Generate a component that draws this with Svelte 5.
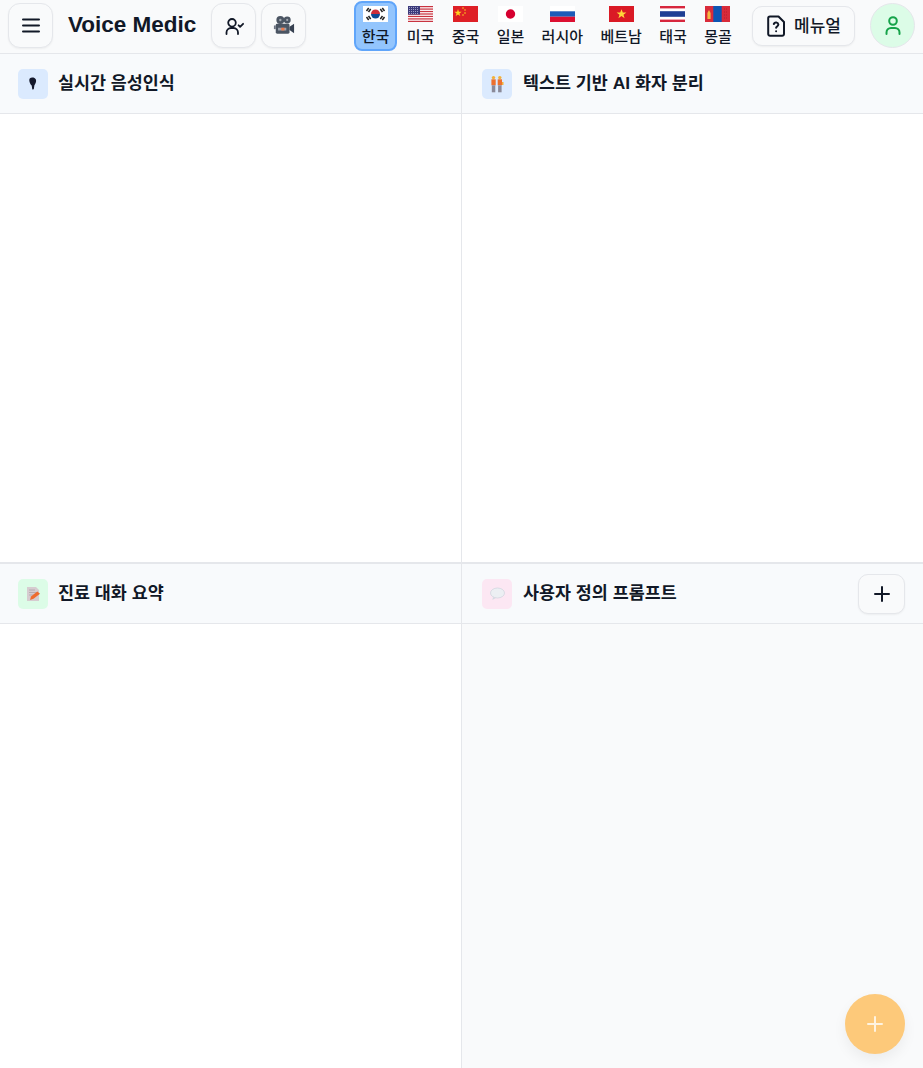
<script>
  const langs = [
    { id: 'kr', label: '한국', active: true },
    { id: 'us', label: '미국' },
    { id: 'cn', label: '중국' },
    { id: 'jp', label: '일본' },
    { id: 'ru', label: '러시아' },
    { id: 'vn', label: '베트남' },
    { id: 'th', label: '태국' },
    { id: 'mn', label: '몽골' }
  ];
  const usStripes = [0, 2.46, 4.92, 7.38, 9.84, 12.3, 14.76];
</script>

<div class="page">
  <header class="topbar">
    <button class="tool" aria-label="메뉴">
      <svg class="ico" viewBox="0 0 24 24"><path d="M4 6.500h16M4 12.500h16M4 18.500h16" /></svg>
    </button>
    <h1 class="brand">Voice Medic</h1>
    <button class="tool" aria-label="화자">
      <svg class="ico thin" viewBox="0 0 24 24"><path d="M4.500 21v-1.500a4.500 4.500 0 0 1 4.500-4.500h2.500a4.500 4.500 0 0 1 4.500 4.500V21" /><circle cx="10" cy="9.800" r="3.800" /><path d="M16.600 12.300l1.500 1.500 3-3" /></svg>
    </button>
    <button class="tool" aria-label="영상">
      <svg class="emoji-lg" viewBox="0 0 24 24">
        <circle cx="8" cy="6.500" r="4.300" fill="#4b5563" /><circle cx="15.500" cy="6.500" r="3.800" fill="#4b5563" />
        <circle cx="8" cy="6.500" r="1.300" fill="#a3a9b3" /><circle cx="15.500" cy="6.500" r="1.200" fill="#a3a9b3" />
        <rect x="3" y="10.500" width="15" height="11" rx="1.500" fill="#4b5563" />
        <rect x="5.500" y="15" width="9" height="3" fill="#9ca3af" /><rect x="9" y="15" width="3.500" height="3" fill="#ea7a4c" />
        <path d="M18 14l5-3.500v10.500l-5-3.500z" fill="#374151" /><rect x="1" y="12.500" width="2" height="4" fill="#6b7280" />
      </svg>
    </button>

    <nav class="langs">
      {#each langs as l}
        <button class="lang" class:active={l.active}>
          <svg class="flag" viewBox="0 0 25 16" preserveAspectRatio="none">
            {#if l.id === 'kr'}
              <rect width="25" height="16" fill="#fff" />
              <path d="M8 8a4.500 4.500 0 0 1 9 0z" fill="#cd2e3a" /><path d="M8 8a4.500 4.500 0 0 0 9 0z" fill="#0f4a94" />
              <g stroke="#222" stroke-width="1.500"><path d="M3.500 5l2.200-3M5.500 6l2.200-3M17.300 3l2.200 3M19.300 2l2.200 3M3.500 11l2.200 3M5.500 10l2.200 3M17.300 13l2.200-3M19.300 14l2.200-3" /></g>
            {:else if l.id === 'us'}
              <rect width="25" height="16" fill="#fff" />
              {#each usStripes as y}<rect {y} width="25" height="1.230" fill="#c8323f" />{/each}
              <rect width="12" height="8.600" fill="#3c3b7c" />
              <path d="M1 1.500h10M1 3.500h10M1 5.500h10M1 7.500h10" stroke="#c9cbe8" stroke-width=".7" stroke-dasharray="1 1" />
            {:else if l.id === 'cn'}
              <rect width="25" height="16" fill="#de1f26" />
              <path d="M5 3l.9 2.700h2.800L6.400 7.400l.9 2.700L5 8.400 2.700 10.100l.9-2.700-2.300-1.700h2.800z" fill="#ffd21f" />
              <g fill="#ffd21f"><circle cx="10" cy="2" r=".8" /><circle cx="12" cy="4" r=".8" /><circle cx="12" cy="7" r=".8" /><circle cx="10" cy="9" r=".8" /></g>
            {:else if l.id === 'jp'}
              <rect width="25" height="16" fill="#fff" /><circle cx="12.500" cy="8" r="4.700" fill="#d6002f" />
            {:else if l.id === 'ru'}
              <rect width="25" height="5.400" fill="#fff" /><rect y="5.300" width="25" height="5.400" fill="#1d5bb8" /><rect y="10.700" width="25" height="5.300" fill="#dc0f31" />
            {:else if l.id === 'vn'}
              <rect width="25" height="16" fill="#da1a25" />
              <path d="M12.500 3.200l1.300 3.300h3.600l-2.900 2.200 1.100 3.600-3.100-2.200-3.100 2.200 1.100-3.600-2.900-2.200h3.600z" fill="#ffd83a" />
            {:else if l.id === 'th'}
              <rect width="25" height="16" fill="#fff" /><rect width="25" height="2.400" fill="#d7263d" /><rect y="13.600" width="25" height="2.400" fill="#d7263d" /><rect y="5.200" width="25" height="5.600" fill="#1f3f94" />
            {:else}
              <rect width="25" height="16" fill="#d92b3a" /><rect x="8.300" width="8.400" height="16" fill="#0d55b3" />
              <path d="M4 4l1.600 3v6H2.400V7z" fill="#f5b942" />
              <path d="M19 3h4M19 6h4M19 9h4M19 12h4" stroke="#b81f2d" stroke-width="1" stroke-dasharray="1 1" />
            {/if}
          </svg>
          <span>{l.label}</span>
        </button>
      {/each}
    </nav>

    <button class="manual">
      <svg class="ico" viewBox="0 0 24 24"><path d="M6 2.500h8.500L20 8v12a1.800 1.800 0 0 1-1.800 1.800H6A1.800 1.800 0 0 1 4.200 20V4.300A1.800 1.800 0 0 1 6 2.500z" /><path d="M9.800 10a2.400 2.400 0 0 1 4.600.6c0 1.600-2.300 2-2.300 3.200M12.100 17.200v.1" /></svg>
      <span>메뉴얼</span>
    </button>
    <button class="avatar" aria-label="사용자">
      <svg class="ico green" viewBox="0 0 24 24"><circle cx="12" cy="8" r="3.800" /><path d="M5.500 21v-1.500a4.500 4.500 0 0 1 4.500-4.500h4a4.500 4.500 0 0 1 4.500 4.500V21" /></svg>
    </button>
  </header>

  <main class="grid">
    <section class="panel top left">
      <div class="head">
        <span class="badge blue">
          <svg class="emoji" viewBox="0 0 16 16"><path d="M4.700 2.500C6.300 1 10 1.300 10.900 3.600c.7 2-.4 4.300-1.500 5.700l-.6 4-1.500.2-.6-3.900C5.200 8.200 3.500 4.300 4.700 2.500z" fill="#14182c" /></svg>
        </span>
        <h2>실시간 음성인식</h2>
      </div>
    </section>
    <section class="panel top">
      <div class="head right">
        <span class="badge blue">
          <svg class="emoji big" viewBox="0 0 16 18">
            <circle cx="4.500" cy="2.600" r="1.700" fill="#f2b13a" /><circle cx="10.800" cy="2.600" r="1.700" fill="#f2b13a" />
            <rect x="2.400" y="4.300" width="4.300" height="6" fill="#ec6f2d" /><rect x="8.700" y="4.300" width="4.300" height="6" fill="#ec6f2d" />
            <rect x="2.800" y="10.300" width="3.500" height="7" fill="#8a8a99" /><rect x="9.100" y="10.300" width="3.500" height="7" fill="#8a8a99" />
            <rect x="13" y="7" width="1.500" height="3" fill="#f2b13a" />
          </svg>
        </span>
        <h2>텍스트 기반 AI 화자 분리</h2>
      </div>
    </section>
    <section class="panel left">
      <div class="head">
        <span class="badge green-bg">
          <svg class="emoji" viewBox="0 0 16 16">
            <path d="M2 1h9l3 3v11H2z" fill="#d6ccd0" />
            <path d="M4 4h6M4 6.500h8M4 9h5" stroke="#b3a8ad" stroke-width=".9" />
            <path d="M5 14l1-3.400 6.300-5 2.700 2.200-6.500 5z" fill="#ee6c2f" />
          </svg>
        </span>
        <h2>진료 대화 요약</h2>
      </div>
    </section>
    <section class="panel muted">
      <div class="head right">
        <span class="badge pink">
          <svg class="emoji" viewBox="0 0 16 14">
            <ellipse cx="8.500" cy="6" rx="7" ry="5" fill="#eceff3" stroke="#c8cfd8" stroke-width=".6" />
            <path d="M4 10l-.6 3 3.400-2z" fill="#d5dbe3" />
          </svg>
        </span>
        <h2>사용자 정의 프롬프트</h2>
        <button class="add" aria-label="추가">
          <svg class="ico" viewBox="0 0 24 24"><path d="M12 5v14M5 12h14" /></svg>
        </button>
      </div>
    </section>
  </main>

  <button class="fab" aria-label="새로 만들기">
    <svg class="ico white" viewBox="0 0 24 24"><path d="M12 5v14M5 12h14" /></svg>
  </button>
</div>

<style>
  :global(body) {
    margin: 0;
    background: #fff;
    font-family: "Liberation Sans", "Noto Sans CJK KR", sans-serif;
    color: #111827;
  }
  button {
    font-family: inherit;
    color: inherit;
    cursor: pointer;
    padding: 0;
  }
  .page {
    position: relative;
    height: 1068px;
    overflow: hidden;
    display: flex;
    flex-direction: column;
  }
  .topbar {
    height: 53px;
    flex: none;
    border-bottom: 1px solid #e5e7eb;
    background: #f9fafb;
    display: flex;
    align-items: center;
    padding: 0 8px;
    gap: 5px;
  }
  .tool {
    width: 45px;
    height: 45px;
    flex: none;
    display: flex;
    align-items: center;
    justify-content: center;
    background: #f9fafb;
    border: 1px solid #e5e7eb;
    border-radius: 12px;
    box-shadow: 0 1px 2px rgba(0, 0, 0, 0.05);
    margin-bottom: 3px;
  }
  .ico {
    width: 24px;
    height: 24px;
    flex: none;
    fill: none;
    stroke: #111827;
    stroke-width: 2;
    stroke-linecap: round;
    stroke-linejoin: round;
  }
  .ico.thin { stroke-width: 1.800; }
  .ico.green { stroke: #16a34a; }
  .ico.white { stroke: #fef3e0; }
  .emoji-lg { width: 22px; height: 22px; }
  .brand {
    margin: 0 10px 3px 10px;
    font-size: 22.500px;
    line-height: 32px;
    font-weight: 700;
    white-space: nowrap;
  }
  .langs {
    display: flex;
    gap: 2px;
    margin-left: 42.600px;
    margin-bottom: 2px;
  }
  .lang {
    height: 50px;
    background: transparent;
    border: 2px solid transparent;
    border-radius: 8px;
    display: flex;
    flex-direction: column;
    align-items: center;
    justify-content: flex-start;
    padding: 3px 5.700px 0;
    font-size: 15px;
    line-height: 20px;
    font-weight: 500;
    white-space: nowrap;
  }
  .lang.active {
    background: #93c5fd;
    border-color: #60a5fa;
  }
  .flag {
    width: 25px;
    height: 16px;
    margin-bottom: 5px;
    flex: none;
  }
  .manual {
    width: 103px;
    height: 40px;
    margin-left: auto;
    margin-bottom: 2px;
    padding-right: 2px;
    flex: none;
    display: flex;
    align-items: center;
    justify-content: center;
    gap: 6px;
    background: #f9fafb;
    border: 1px solid #e5e7eb;
    border-radius: 10px;
    box-shadow: 0 1px 2px rgba(0, 0, 0, 0.05);
    font-size: 17px;
    font-weight: 500;
  }
  .manual span { margin-bottom: 2px; }
  .avatar {
    width: 45px;
    height: 45px;
    margin-left: 10px;
    margin-bottom: 3px;
    flex: none;
    display: flex;
    align-items: center;
    justify-content: center;
    border-radius: 50%;
    border: 1px solid #e5e7eb;
    background: #dcfce7;
  }
  .grid {
    flex: 1;
    display: grid;
    grid-template-columns: 462px 1fr;
    grid-template-rows: 510px 1fr;
    min-height: 0;
  }
  .panel {
    background: #fff;
    min-width: 0;
  }
  .panel.left { border-right: 1px solid #e5e7eb; }
  .panel.top { border-bottom: 2px solid #e5e7eb; }
  .panel.muted { background: #f9fafb; }
  .head {
    height: 59px;
    border-bottom: 1px solid #e5e7eb;
    background: #f8fafc;
    display: flex;
    align-items: center;
    gap: 10px;
    padding: 0 18px;
  }
  .head.right {
    padding-left: 20px;
    gap: 11px;
  }
  .badge {
    width: 30px;
    height: 30px;
    border-radius: 5px;
    display: flex;
    align-items: center;
    justify-content: center;
    flex: none;
  }
  .badge.blue { background: #dbeafe; }
  .badge.green-bg { background: #dcfce7; }
  .badge.pink { background: #fce7f3; }
  .emoji { width: 16px; height: 16px; }
  .emoji.big { width: 18px; height: 18px; }
  h2 {
    margin: 0 0 2px;
    font-size: 17.400px;
    line-height: 24px;
    font-weight: 700;
    color: #111827;
    white-space: nowrap;
  }
  .add {
    margin-left: auto;
    width: 47px;
    height: 40px;
    display: flex;
    align-items: center;
    justify-content: center;
    background: #f9fafb;
    border: 1px solid #e5e7eb;
    border-radius: 10px;
    box-shadow: 0 1px 2px rgba(0, 0, 0, 0.05);
  }
  .fab {
    position: absolute;
    right: 18px;
    bottom: 14px;
    width: 60px;
    height: 60px;
    border: 0;
    border-radius: 50%;
    background: #fdc97a;
    display: flex;
    align-items: center;
    justify-content: center;
    box-shadow: 0 6px 14px rgba(0, 0, 0, 0.06);
  }
</style>
